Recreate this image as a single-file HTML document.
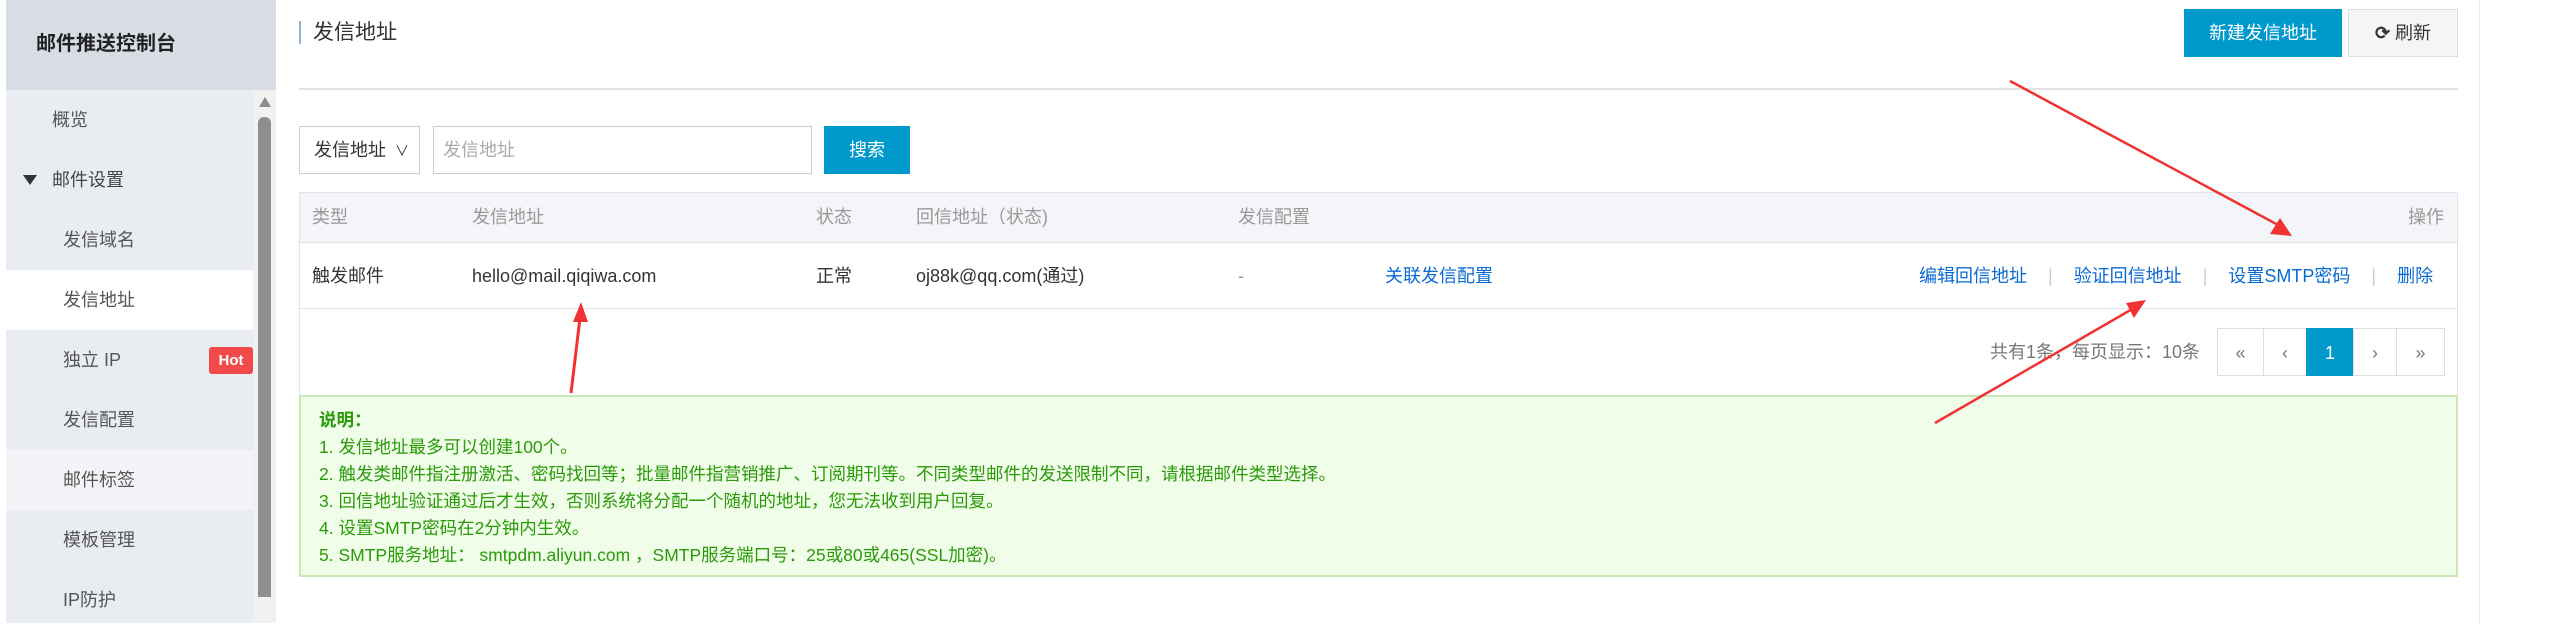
<!DOCTYPE html>
<html><head><meta charset="utf-8"><style>
*{margin:0;padding:0;box-sizing:border-box}
body{width:2560px;height:623px;overflow:hidden;background:#fff;font-family:"Liberation Sans","Noto Sans CJK SC",sans-serif;position:relative;color:#333}
.a{position:absolute;white-space:nowrap}
.side{position:absolute;left:6px;top:90px;width:247px;height:533px;background:#e9edf2}
.mi{position:absolute;left:6px;width:247px;height:60px;line-height:60px;font-size:18px;color:#555}
.th{position:absolute;top:192px;height:51px;line-height:51px;font-size:18px;color:#999}
.td{position:absolute;top:243px;height:66px;line-height:66px;font-size:18px;color:#333}
.lk{color:#0a6ad4}
.sep{color:#ccc}
.pg{position:absolute;top:328px;height:48px;line-height:48px;text-align:center;font-size:18px;color:#777;border:1px solid #ddd;background:#fff}
.nt{position:absolute;left:319px;font-size:17.5px;color:#2a9a0a;white-space:nowrap}
</style></head><body>
<div class="a" style="left:6px;top:0;width:270px;height:90px;background:#d8dde5"></div>
<div class="a" style="left:36px;top:24px;font-size:20px;font-weight:bold;color:#222;line-height:40px">邮件推送控制台</div>
<div class="side"></div>
<div class="a" style="left:253px;top:90px;width:23px;height:533px;background:#f1f1f1"></div>
<div class="a" style="left:258px;top:117px;width:13px;height:480px;background:#8e8e8e;border-radius:6px 6px 0 0"></div>
<div class="a" style="left:259px;top:97px;width:0;height:0;border-left:6px solid transparent;border-right:6px solid transparent;border-bottom:10px solid #8e8e8e"></div>
<div class="mi" style="top:90px;padding-left:46px">概览</div>
<div class="mi" style="top:150px;padding-left:46px;color:#444">邮件设置</div>
<div class="a" style="left:23px;top:175px;width:0;height:0;border-left:7px solid transparent;border-right:7px solid transparent;border-top:10px solid #333"></div>
<div class="mi" style="top:210px;padding-left:57px">发信域名</div>
<div class="mi" style="top:270px;padding-left:57px;background:#fff">发信地址</div>
<div class="mi" style="top:330px;padding-left:57px">独立 IP</div>
<div class="a" style="left:209px;top:347px;width:44px;height:27px;background:#f2494b;color:#fff;font-weight:bold;font-size:15px;line-height:27px;text-align:center;border-radius:3px">Hot</div>
<div class="mi" style="top:390px;padding-left:57px">发信配置</div>
<div class="mi" style="top:450px;padding-left:57px;background:#f3f4f7">邮件标签</div>
<div class="mi" style="top:510px;padding-left:57px">模板管理</div>
<div class="mi" style="top:570px;padding-left:57px">IP防护</div>

<div class="a" style="left:299px;top:21px;width:2px;height:23px;background:#8fb3d8"></div>
<div class="a" style="left:313px;top:18px;font-size:21px;line-height:30px;color:#333">发信地址</div>
<div class="a" style="left:2184px;top:9px;width:158px;height:48px;background:#0099cc;color:#fff;font-size:18px;line-height:48px;text-align:center">新建发信地址</div>
<div class="a" style="left:2348px;top:9px;width:110px;height:48px;background:#f5f5f5;border:1px solid #ddd;color:#333;font-size:18px;line-height:46px;text-align:center"><b>⟳</b> 刷新</div>
<div class="a" style="left:299px;top:88px;width:2159px;height:2px;background:#e3e3e3"></div>
<div class="a" style="left:2479px;top:0;width:1px;height:623px;background:#ececec"></div>

<div class="a" style="left:299px;top:126px;width:121px;height:48px;border:1px solid #ccc;font-size:18px;line-height:46px;padding-left:14px;color:#333">发信地址 <span style="font-size:14px;margin-left:4px">∨</span></div>
<div class="a" style="left:433px;top:126px;width:379px;height:48px;border:1px solid #ccc;font-size:18px;line-height:46px;padding-left:9px;color:#aaa">发信地址</div>
<div class="a" style="left:824px;top:126px;width:86px;height:48px;background:#0099cc;color:#fff;font-size:18px;line-height:48px;text-align:center">搜索</div>

<div class="a" style="left:299px;top:192px;width:2159px;height:385px;border:1px solid #e1e4e8;border-bottom:none"></div>
<div class="a" style="left:300px;top:193px;width:2157px;height:50px;background:#f3f5f8;border-bottom:1px solid #e1e4e8"></div>
<div class="a" style="left:300px;top:308px;width:2157px;height:1px;background:#e1e4e8"></div>
<div class="th" style="left:312px">类型</div>
<div class="th" style="left:472px">发信地址</div>
<div class="th" style="left:816px">状态</div>
<div class="th" style="left:916px">回信地址（状态)</div>
<div class="th" style="left:1238px">发信配置</div>
<div class="th" style="left:2408px">操作</div>
<div class="td" style="left:312px">触发邮件</div>
<div class="td" style="left:472px">hello@mail.qiqiwa.com</div>
<div class="td" style="left:816px">正常</div>
<div class="td" style="left:916px">oj88k@qq.com(通过)</div>
<div class="td" style="left:1238px;color:#999">-</div>
<div class="td lk" style="left:1385px">关联发信配置</div>
<div class="td" style="left:1919px"><span class="lk">编辑回信地址</span><span class="sep" style="margin:0 21px">|</span><span class="lk">验证回信地址</span><span class="sep" style="margin:0 21px">|</span><span class="lk">设置SMTP密码</span><span class="sep" style="margin:0 21px">|</span><span class="lk">删除</span></div>

<div class="a" style="left:1990px;top:328px;line-height:48px;font-size:18px;color:#777">共有1条，每页显示：10条</div>
<div class="pg" style="left:2217px;width:47px">«</div>
<div class="pg" style="left:2263px;width:44px">‹</div>
<div class="pg" style="left:2306px;width:48px;background:#0099cc;color:#fff;border-color:#0099cc">1</div>
<div class="pg" style="left:2353px;width:44px">›</div>
<div class="pg" style="left:2396px;width:49px">»</div>

<div class="a" style="left:299px;top:395px;width:2159px;height:182px;background:#f0fde8;border:2px solid #c9e8b5"></div>
<div class="nt" style="top:407px;font-weight:bold">说明：</div>
<div class="nt" style="top:434px">1. 发信地址最多可以创建100个。</div>
<div class="nt" style="top:461px">2. 触发类邮件指注册激活、密码找回等；批量邮件指营销推广、订阅期刊等。不同类型邮件的发送限制不同，请根据邮件类型选择。</div>
<div class="nt" style="top:488px">3. 回信地址验证通过后才生效，否则系统将分配一个随机的地址，您无法收到用户回复。</div>
<div class="nt" style="top:515px">4. 设置SMTP密码在2分钟内生效。</div>
<div class="nt" style="top:542px">5. SMTP服务地址： smtpdm.aliyun.com ，SMTP服务端口号：25或80或465(SSL加密)。</div>

<svg class="a" style="left:0;top:0" width="2560" height="623">
<g stroke="#f03232" stroke-width="3" fill="#f03232">
<line x1="571" y1="393" x2="580" y2="318"/>
<polygon points="581,302 573,322 588,322" stroke="none"/>
<line x1="2010" y1="81" x2="2280" y2="226" stroke-width="2.5"/>
<polygon points="2292,236 2270,234 2280,218" stroke="none"/>
<line x1="1935" y1="423" x2="2134" y2="308" stroke-width="2.5"/>
<polygon points="2146,300 2134,318 2126,303" stroke="none"/>
</g>
</svg>
</body></html>
